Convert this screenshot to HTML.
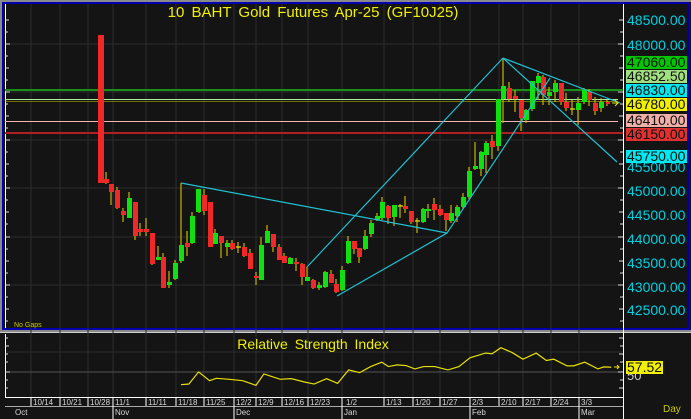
<!DOCTYPE html>
<html><head><meta charset="utf-8"><style>
html,body{margin:0;padding:0;background:#141414;width:691px;height:419px;overflow:hidden}
svg{display:block}
text{font-family:"Liberation Sans",sans-serif}
</style></head><body>
<svg width="691" height="419" viewBox="0 0 691 419" xmlns="http://www.w3.org/2000/svg">
<rect x="0" y="0" width="691" height="419" fill="#141414"/>
<!-- frames -->
<rect x="0" y="0" width="691" height="2" fill="#8a8a8a"/>
<rect x="0" y="0" width="2" height="332" fill="#8a8a8a"/>
<rect x="2" y="2" width="687" height="2" fill="#0000b0"/>
<rect x="2" y="2" width="2" height="328" fill="#0000b0"/>
<rect x="687" y="2" width="2" height="328" fill="#0000b0"/>
<rect x="2" y="328" width="687" height="2" fill="#0000b0"/>
<rect x="0" y="330" width="691" height="2" fill="#8a8a8a"/>
<rect x="0" y="332" width="691" height="1" fill="#d0d0d0"/>
<!-- grid -->
<g stroke="#2c2c2c" stroke-width="1">
<line x1="5" y1="44" x2="622" y2="44"/><line x1="5" y1="92" x2="622" y2="92"/><line x1="5" y1="140" x2="622" y2="140"/><line x1="5" y1="188" x2="622" y2="188"/><line x1="5" y1="237" x2="622" y2="237"/><line x1="5" y1="285" x2="622" y2="285"/>
<line x1="31" y1="4" x2="31" y2="397"/><line x1="60" y1="4" x2="60" y2="397"/><line x1="88" y1="4" x2="88" y2="397"/><line x1="113" y1="4" x2="113" y2="397"/><line x1="146" y1="4" x2="146" y2="397"/><line x1="176" y1="4" x2="176" y2="397"/><line x1="204" y1="4" x2="204" y2="397"/><line x1="234" y1="4" x2="234" y2="397"/><line x1="256" y1="4" x2="256" y2="397"/><line x1="282" y1="4" x2="282" y2="397"/><line x1="308" y1="4" x2="308" y2="397"/><line x1="342" y1="4" x2="342" y2="397"/><line x1="384" y1="4" x2="384" y2="397"/><line x1="413" y1="4" x2="413" y2="397"/><line x1="440" y1="4" x2="440" y2="397"/><line x1="470" y1="4" x2="470" y2="397"/><line x1="499" y1="4" x2="499" y2="397"/><line x1="523" y1="4" x2="523" y2="397"/><line x1="551" y1="4" x2="551" y2="397"/><line x1="579" y1="4" x2="579" y2="397"/>
<line x1="5" y1="352" x2="622" y2="352"/><line x1="5" y1="372" x2="622" y2="372" stroke="#555"/>
</g>
<!-- axes -->
<line x1="5.5" y1="4" x2="5.5" y2="328" stroke="#fff"/>
<line x1="623.5" y1="4" x2="623.5" y2="419" stroke="#fff"/>
<line x1="5.5" y1="334" x2="5.5" y2="397" stroke="#fff"/>
<g stroke="#ddd">
<path d="M5 20h4M5 32h3M5 44h5M5 56h3M5 68h4M5 80h3M5 92h5M5 104h3M5 116h4M5 128h3M5 140h5M5 152h3M5 164h4M5 176h3M5 188h5M5 200h3M5 212h4M5 224h3M5 237h5M5 249h3M5 261h4M5 273h3M5 285h5M5 297h3M5 309h4M5 321h3"/>
<path d="M619 20h4M620 32h3M618 44h5M620 56h3M619 68h4M620 80h3M618 92h5M620 104h3M619 116h4M620 128h3M618 140h5M620 152h3M619 164h4M620 176h3M618 188h5M620 200h3M619 212h4M620 224h3M618 237h5M620 249h3M619 261h4M620 273h3M618 285h5M620 297h3M619 309h4M620 321h3"/>
<path d="M5 338h3M5 346h4M5 354h3M5 362h3M5 372h5M5 380h3M5 388h3M619 338h4M620 346h3M619 354h4M620 362h3M618 372h5M620 380h3M619 388h4"/>
</g>
<!-- title -->
<text x="313" y="17" fill="#f0f000" font-size="15" text-anchor="middle" word-spacing="3">10 BAHT Gold Futures Apr-25 (GF10J25)</text>
<text x="14" y="327" fill="#c8c800" font-size="7">No Gaps</text>
<!-- level lines -->
<rect x="5" y="89" width="618" height="2" fill="#189018"/>
<line x1="5" y1="99.5" x2="618" y2="99.5" stroke="#a8f0a0"/>
<line x1="5" y1="101.5" x2="618" y2="101.5" stroke="#b0b000" stroke-opacity=".6"/>
<line x1="5" y1="121.5" x2="618" y2="121.5" stroke="#f0b8b0"/>
<rect x="5" y="132" width="618" height="2" fill="#b02020"/>
<!-- candles wicks -->
<g stroke="#c8b400" stroke-width="1.2">
<path d="M106 172v12M111 184v21M117 187v22M123 208v14M129 192v26M135 202v38M140 223v13M146 218v18M152 233v32M158 246v14M163 253v35M169 271v17M175 260v20M181 183v80M187 231v25M192 212v32M199 189v24M204 189v26M210 202v33M215 229v15M221 236v22M227 240v16M232 240v10M238 242v11M244 243v14M250 249v13M256 272v13M261 237v26M267 225v18M273 234v18M279 244v15M284 253v10M290 257v6M296 258v13M302 263v22M307 267v14M313 279v10M319 282v8M325 271v17M331 270v13M336 279v14M342 266v25M348 236v28M354 241v13M359 248v15M365 230v20M371 220v17M377 213v8M382 197v23M388 205v19M394 205v21M400 204v14M405 196v17M411 211v13M417 218v15M423 208v15M428 204v14M434 198v22M440 205v11M446 213v18M451 205v18M457 205v17M463 193v16M469 167v32M475 142v28M481 151v25M486 141v32M492 135v24M498 99v52M503 58v65M509 82v20M515 90v22M521 100v31M526 109v14M532 81v30M538 73v27M543 75v30M549 87v18M555 80v22M561 83v22M566 93v18M572 100v15M578 97v28M584 88v16M589 89v17M595 97v18M601 98v14M607 100v6"/>
</g>
<!-- red bodies -->
<g fill="#f02828">
<rect x="98" y="35" width="6" height="148"/><rect x="104" y="179" width="5" height="4"/><rect x="109" y="184" width="5" height="8"/><rect x="115" y="190" width="5" height="18"/><rect x="121" y="211" width="5" height="4"/><rect x="133" y="202" width="5" height="34"/><rect x="138" y="229" width="5" height="3"/><rect x="144" y="229" width="5" height="3"/><rect x="150" y="233" width="5" height="31"/><rect x="161" y="257" width="5" height="31"/><rect x="185" y="243" width="5" height="4"/><rect x="202" y="195" width="5" height="16"/><rect x="208" y="202" width="5" height="45"/><rect x="219" y="236" width="5" height="7"/><rect x="230" y="243" width="5" height="6"/><rect x="242" y="247" width="5" height="9"/><rect x="248" y="253" width="5" height="16"/><rect x="254" y="276" width="5" height="2"/><rect x="271" y="234" width="5" height="13"/><rect x="277" y="247" width="5" height="13"/><rect x="282" y="256" width="5" height="7"/><rect x="294" y="262" width="5" height="2"/><rect x="300" y="264" width="5" height="13"/><rect x="311" y="280" width="5" height="8"/><rect x="329" y="274" width="5" height="9"/><rect x="334" y="284" width="5" height="8"/><rect x="352" y="241" width="5" height="8"/><rect x="357" y="248" width="5" height="9"/><rect x="386" y="206" width="5" height="12"/><rect x="403" y="206" width="5" height="3"/><rect x="409" y="211" width="5" height="11"/><rect x="432" y="204" width="5" height="6"/><rect x="438" y="209" width="5" height="6"/><rect x="444" y="213" width="5" height="7"/><rect x="490" y="141" width="5" height="6"/><rect x="507" y="88" width="5" height="11"/><rect x="513" y="96" width="5" height="3"/><rect x="519" y="100" width="5" height="18"/><rect x="541" y="77" width="5" height="18"/><rect x="559" y="83" width="5" height="19"/><rect x="564" y="102" width="5" height="6"/><rect x="587" y="92" width="5" height="8"/><rect x="593" y="103" width="5" height="8"/><rect x="606" y="102" width="4" height="2"/>
</g>
<!-- green bodies -->
<g fill="#10e010">
<rect x="127" y="198" width="5" height="20"/><rect x="156" y="257" width="5" height="3"/><rect x="167" y="282" width="5" height="3"/><rect x="173" y="263" width="5" height="16"/><rect x="179" y="245" width="5" height="16"/><rect x="190" y="216" width="5" height="27"/><rect x="196" y="189" width="5" height="23"/><rect x="213" y="233" width="5" height="11"/><rect x="225" y="243" width="5" height="4"/><rect x="259" y="245" width="5" height="35"/><rect x="265" y="231" width="5" height="12"/><rect x="288" y="258" width="5" height="6"/><rect x="305" y="277" width="5" height="4"/><rect x="317" y="285" width="5" height="3"/><rect x="323" y="272" width="5" height="15"/><rect x="340" y="270" width="5" height="20"/><rect x="346" y="241" width="5" height="22"/><rect x="363" y="236" width="5" height="13"/><rect x="369" y="223" width="5" height="11"/><rect x="375" y="216" width="5" height="4"/><rect x="380" y="202" width="5" height="16"/><rect x="392" y="205" width="5" height="12"/><rect x="421" y="209" width="5" height="13"/><rect x="426" y="209" width="5" height="2"/><rect x="449" y="213" width="5" height="8"/><rect x="455" y="207" width="5" height="9"/><rect x="461" y="197" width="5" height="10"/><rect x="467" y="171" width="5" height="26"/><rect x="473" y="166" width="5" height="3"/><rect x="479" y="152" width="5" height="17"/><rect x="484" y="143" width="5" height="12"/><rect x="496" y="99" width="5" height="47"/><rect x="501" y="86" width="5" height="13"/><rect x="524" y="110" width="5" height="10"/><rect x="530" y="81" width="5" height="28"/><rect x="536" y="76" width="5" height="7"/><rect x="547" y="92" width="5" height="4"/><rect x="553" y="83" width="5" height="9"/><rect x="576" y="103" width="5" height="7"/><rect x="582" y="90" width="5" height="12"/><rect x="599" y="102" width="5" height="6"/>
</g>
<g stroke="#e8e000" stroke-width="1.2"><path d="M236 247h5M398 206h5M415 221h5M570 109h5"/></g>
<!-- trend lines -->
<g stroke="#20c0d0" stroke-width="1.2" fill="none">
<path d="M181 183L447 233"/><path d="M307 267L503 58"/><path d="M337 296L447 233L550 78"/><path d="M503 58L620 103"/><path d="M503 58L617 162"/>
</g>
<path d="M612 103h6M615 100l3 3l-3 3" stroke="#e8e000" fill="none"/>
<!-- price labels -->
<g font-size="14" fill="#00d0e0">
<text x="627" y="25">48500.00</text><text x="627" y="50">48000.00</text><text x="627" y="172">45500.00</text><text x="627" y="315">42500.00</text>
<text x="627" y="185" opacity=".0">45000.00</text>
</g>
<text x="627" y="196" font-size="14" fill="#00d0e0">45000.00</text>
<text x="627" y="244" font-size="14" fill="#00d0e0">44000.00</text>
<text x="627" y="292" font-size="14" fill="#00d0e0">43000.00</text>
<text x="627" y="220" font-size="14" fill="#00d0e0">44500.00</text>
<text x="627" y="268" font-size="14" fill="#00d0e0">43500.00</text>
<rect x="626" y="56" width="61" height="13" fill="#00c800"/><text x="627" y="67" font-size="14" fill="#101010">47060.00</text>
<rect x="626" y="70" width="61" height="13" fill="#a0e080"/><text x="627" y="81" font-size="14" fill="#101010">46852.50</text>
<rect x="626" y="84" width="61" height="13" fill="#00e8f0"/><text x="627" y="95" font-size="14" fill="#101010">46830.00</text>
<rect x="626" y="98" width="61" height="13" fill="#f0f000"/><text x="627" y="109" font-size="14" fill="#101010">46780.00</text>
<rect x="626" y="114" width="61" height="13" fill="#f0b0a8"/><text x="627" y="125" font-size="14" fill="#101010">46410.00</text>
<rect x="626" y="128" width="61" height="13" fill="#e03030"/><text x="627" y="139" font-size="14" fill="#101010">46150.00</text>
<rect x="626" y="150" width="61" height="13" fill="#00e8f0"/><text x="627" y="161" font-size="14" fill="#101010">45750.00</text>
<!-- RSI -->
<text x="313" y="349" fill="#f0f000" font-size="14" text-anchor="middle" word-spacing="3">Relative Strength Index</text>
<g transform="translate(0,300) scale(0.4413,0.3361)">
<polyline fill="none" stroke="#e8e000" stroke-width="1.2" vector-effect="non-scaling-stroke" points="410,252 428,250 450,214 475,240 490,233 520,236 550,240 580,254 598,220 635,236 660,234 690,244 712,250 740,234 765,248 790,208 815,216 840,198 865,185 880,198 900,193 920,195 940,205 960,198 985,198 1015,208 1040,198 1065,172 1100,158 1115,160 1135,142 1160,156 1185,176 1215,158 1238,180 1255,176 1285,196 1300,196 1325,185 1355,205 1368,199 1385,200"/>
</g>
<path d="M614 367h5M617 365l2 2l-2 2" stroke="#e8e000" fill="none"/>
<text x="627" y="380" font-size="13" fill="#ccc">50</text>
<rect x="626" y="361" width="37" height="13" fill="#f0f000"/><text x="627" y="372" font-size="14" fill="#101010">57.52</text>
<!-- date rows -->
<line x1="5" y1="397.5" x2="623" y2="397.5" stroke="#fff"/>
<line x1="5" y1="406.5" x2="623" y2="406.5" stroke="#aaa"/>
<g stroke="#fff"><path d="M31 397v9M60 397v9M88 397v9M113 397v22M146 397v9M176 397v9M204 397v9M234 397v22M256 397v9M282 397v9M308 397v9M342 397v22M384 397v9M413 397v9M440 397v9M470 397v22M499 397v9M523 397v9M551 397v9M579 397v22"/></g>
<g font-size="8" fill="#d8d8d8">
<text x="33" y="405">10/14</text><text x="62" y="405">10/21</text><text x="90" y="405">10/28</text><text x="115" y="405">11/1</text><text x="148" y="405">11/11</text><text x="178" y="405">11/18</text><text x="206" y="405">11/25</text><text x="236" y="405">12/2</text><text x="258" y="405">12/9</text><text x="284" y="405">12/16</text><text x="310" y="405">12/23</text><text x="346" y="405">1/2</text><text x="386" y="405">1/13</text><text x="415" y="405">1/20</text><text x="442" y="405">1/27</text><text x="472" y="405">2/3</text><text x="501" y="405">2/10</text><text x="525" y="405">2/17</text><text x="553" y="405">2/24</text><text x="581" y="405">3/3</text>
<text x="15" y="415">Oct</text><text x="115" y="415">Nov</text><text x="236" y="415">Dec</text><text x="344" y="415">Jan</text><text x="472" y="415">Feb</text><text x="581" y="415">Mar</text>
</g>
<text x="663" y="412" font-size="10" fill="#c8c800">Day</text>
</svg>
</body></html>
